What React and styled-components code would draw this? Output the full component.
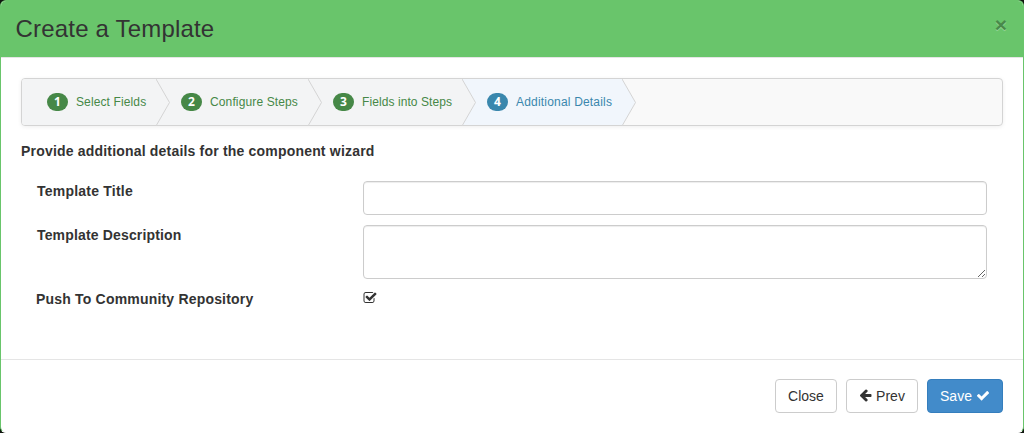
import React from "react";
import styled, { createGlobalStyle } from "styled-components";

const Global = createGlobalStyle`
  * { box-sizing: border-box; }
  html, body { margin: 0; background: #10160f; }
  body { font: 14px/20px "Liberation Sans", Arial, sans-serif; color: #333; }
`;

const Modal = styled.div`
  width: 100%;
  height: 433px;
  display: flex;
  flex-direction: column;
  background: #fff;
  border: 1px solid #69c56b;
  border-bottom-color: #fff;
  border-radius: 6px;
  overflow: hidden;
`;
const Header = styled.header`
  flex: none;
  height: 57px;
  padding: 0 16px 0 14.5px;
  display: flex;
  justify-content: space-between;
  background: #69c56b;
  border-bottom: 1px solid #e5e5e5;
`;
const Title = styled.h1`
  margin: 0;
  padding-top: 11px;
  font-size: 24px;
  line-height: 34px;
  font-weight: 400;
  letter-spacing: 0.19px;
`;
const CloseX = styled.button`
  align-self: flex-start;
  margin-top: 13px;
  padding: 0;
  border: 0;
  background: none;
  font: bold 21px/21px "Liberation Sans", Arial, sans-serif;
  color: #000;
  text-shadow: 0 1px 0 #fff;
  opacity: 0.3;
`;
const Body = styled.main`
  flex: 1;
  padding: 20px 20px 0;
`;
const Wizard = styled.ol`
  margin: 0;
  padding: 0;
  list-style: none;
  display: flex;
  height: 48px;
  background: #f9f9f9;
  border: 1px solid #d4d4d4;
  border-radius: 4px;
  box-shadow: 0 1px 4px rgba(0, 0, 0, 0.065);
`;
const StepItem = styled.li`
  position: relative;
  flex: none;
  display: flex;
  align-items: center;
  gap: 8px;
  width: ${(p) => p.$width}px;
  padding-left: 25px;
  white-space: nowrap;
  font-size: 12px;
  letter-spacing: ${(p) => p.$spacing}px;
  color: ${(p) => (p.$active ? "#3a87ad" : "#468847")};
  background: ${(p) => (p.$active ? "#f1f6fc" : "#f3f4f5")};
  border-radius: ${(p) => (p.$first ? "3px 0 0 3px" : "0")};
`;
const Badge = styled.span`
  width: 21px;
  height: 18px;
  border-radius: 9px;
  background: ${(p) => (p.$active ? "#3a87ad" : "#468847")};
  color: #fff;
  font: bold 12px/18px "Open Sans", sans-serif;
  letter-spacing: 0;
  text-align: center;
`;
const Chevron = styled.svg`
  position: absolute;
  left: 100%;
  top: 0;
  z-index: 1;
`;
const Lead = styled.h2`
  margin: 15px 0 20px;
  font-size: 14px;
  line-height: 20px;
  font-weight: 700;
  letter-spacing: 0.19px;
`;
const Row = styled.div`
  display: grid;
  grid-template-columns: 326px 624px;
  padding-left: 16px;
  margin-bottom: 10px;
`;
const Label = styled.label`
  font-weight: 700;
  letter-spacing: ${(p) => p.$spacing}px;
`;
const Input = styled.input`
  height: 34px;
  border: 1px solid #ccc;
  border-radius: 4px;
  box-shadow: inset 0 1px 1px rgba(0, 0, 0, 0.075);
`;
const TextArea = styled.textarea`
  display: block;
  height: 54px;
  border: 1px solid #ccc;
  border-radius: 4px;
  box-shadow: inset 0 1px 1px rgba(0, 0, 0, 0.075);
  resize: vertical;
`;
const CheckRow = styled(Row)`
  grid-template-columns: 327px 624px;
  padding-left: 15px;
`;
const Footer = styled.footer`
  flex: none;
  height: 73px;
  padding: 19px 20px 0;
  display: flex;
  justify-content: flex-end;
  gap: 9px;
  border-top: 1px solid #e5e5e5;
`;
const Button = styled.button`
  width: ${(p) => p.$width}px;
  height: 34px;
  padding: 0;
  display: flex;
  align-items: center;
  justify-content: center;
  gap: 4px;
  font: 14px/20px "Liberation Sans", Arial, sans-serif;
  color: ${(p) => (p.$primary ? "#fff" : "#333")};
  background: ${(p) => (p.$primary ? "#428bca" : "#fff")};
  border: 1px solid ${(p) => (p.$primary ? "#357ebd" : "#ccc")};
  border-radius: 4px;
`;
const Glyph = styled.svg`
  flex: none;
  display: block;
  fill: currentColor;
`;
const CheckMark = styled(Glyph)`
  margin: 2px 0 0 -0.5px;
`;

const steps = [
  { label: "Select Fields", width: 134, spacing: 0.12 },
  { label: "Configure Steps", width: 152, spacing: 0.13 },
  { label: "Fields into Steps", width: 154, spacing: 0.08 },
  { label: "Additional Details", width: 160, spacing: 0.19, active: true },
];

function Step({ index, label, width, spacing, active }) {
  return (
    <StepItem $width={width} $spacing={spacing} $active={active} $first={index === 0}>
      <Badge $active={active}>{index + 1}</Badge>
      <span>{label}</span>
      <Chevron width="15" height="47" viewBox="0 0 15 47">
        <path d="M0 0L13.5 23.5L0 47Z" fill={active ? "#f1f6fc" : "#f3f4f5"} />
        <path d="M0 0L13.5 23.5L0 47" fill="none" stroke="#d4d4d4" />
      </Chevron>
    </StepItem>
  );
}

export default function App() {
  return (
    <>
      <Global />
      <Modal>
        <Header>
          <Title>Create a Template</Title>
          <CloseX aria-label="Close dialog">×</CloseX>
        </Header>
        <Body>
          <Wizard>
            {steps.map((s, i) => (
              <Step key={s.label} index={i} {...s} />
            ))}
          </Wizard>
          <Lead>Provide additional details for the component wizard</Lead>
          <Row>
            <Label htmlFor="title" $spacing={0.22}>Template Title</Label>
            <Input id="title" />
          </Row>
          <Row>
            <Label htmlFor="description" $spacing={0.16}>Template Description</Label>
            <TextArea id="description" />
          </Row>
          <CheckRow>
            <Label $spacing={0.19}>Push To Community Repository</Label>
            <CheckMark width="14" height="14" viewBox="0 0 1792 1792">
              <path d="M1472 930v318q0 119-84.5 203.5t-203.5 84.5h-832q-119 0-203.5-84.5t-84.5-203.5v-832q0-119 84.5-203.5t203.5-84.5h832q63 0 117 25 15 7 18 23 3 17-9 29l-49 49q-10 10-23 10-3 0-9-2-23-6-45-6h-832q-66 0-113 47t-47 113v832q0 66 47 113t113 47h832q66 0 113-47t47-113v-254q0-13 9-22l64-64q10-10 23-10 6 0 12 3 20 8 20 29zm231-489l-814 814q-24 24-57 24t-57-24l-430-430q-24-24-24-57t24-57l110-110q24-24 57-24t57 24l263 263 647-647q24-24 57-24t57 24l110 110q24 24 24 57t-24 57z" />
            </CheckMark>
          </CheckRow>
        </Body>
        <Footer>
          <Button $width={62}>Close</Button>
          <Button $width={72}>
            <Glyph width="13" height="14" viewBox="64 128 1664 1792">
              <path d="M1664 896v128q0 53-32.5 90.5t-84.5 37.5h-704l293 294q38 36 38 90t-38 90l-75 76q-37 37-90 37-52 0-91-37l-651-652q-37-37-37-90 0-52 37-91l651-650q38-38 91-38 52 0 90 38l75 74q38 38 38 91t-38 91l-293 293h704q52 0 84.5 37.5t32.5 90.5z" />
            </Glyph>
            Prev
          </Button>
          <Button $width={76} $primary>
            Save
            <Glyph width="14" height="14" viewBox="0 64 1792 1792">
              <path d="M1671 566q0 40-28 68l-724 724-136 136q-28 28-68 28t-68-28l-136-136-362-362q-28-28-28-68t28-68l136-136q28-28 68-28t68 28l294 295 656-657q28-28 68-28t68 28l136 136q28 28 28 68z" />
            </Glyph>
          </Button>
        </Footer>
      </Modal>
    </>
  );
}
